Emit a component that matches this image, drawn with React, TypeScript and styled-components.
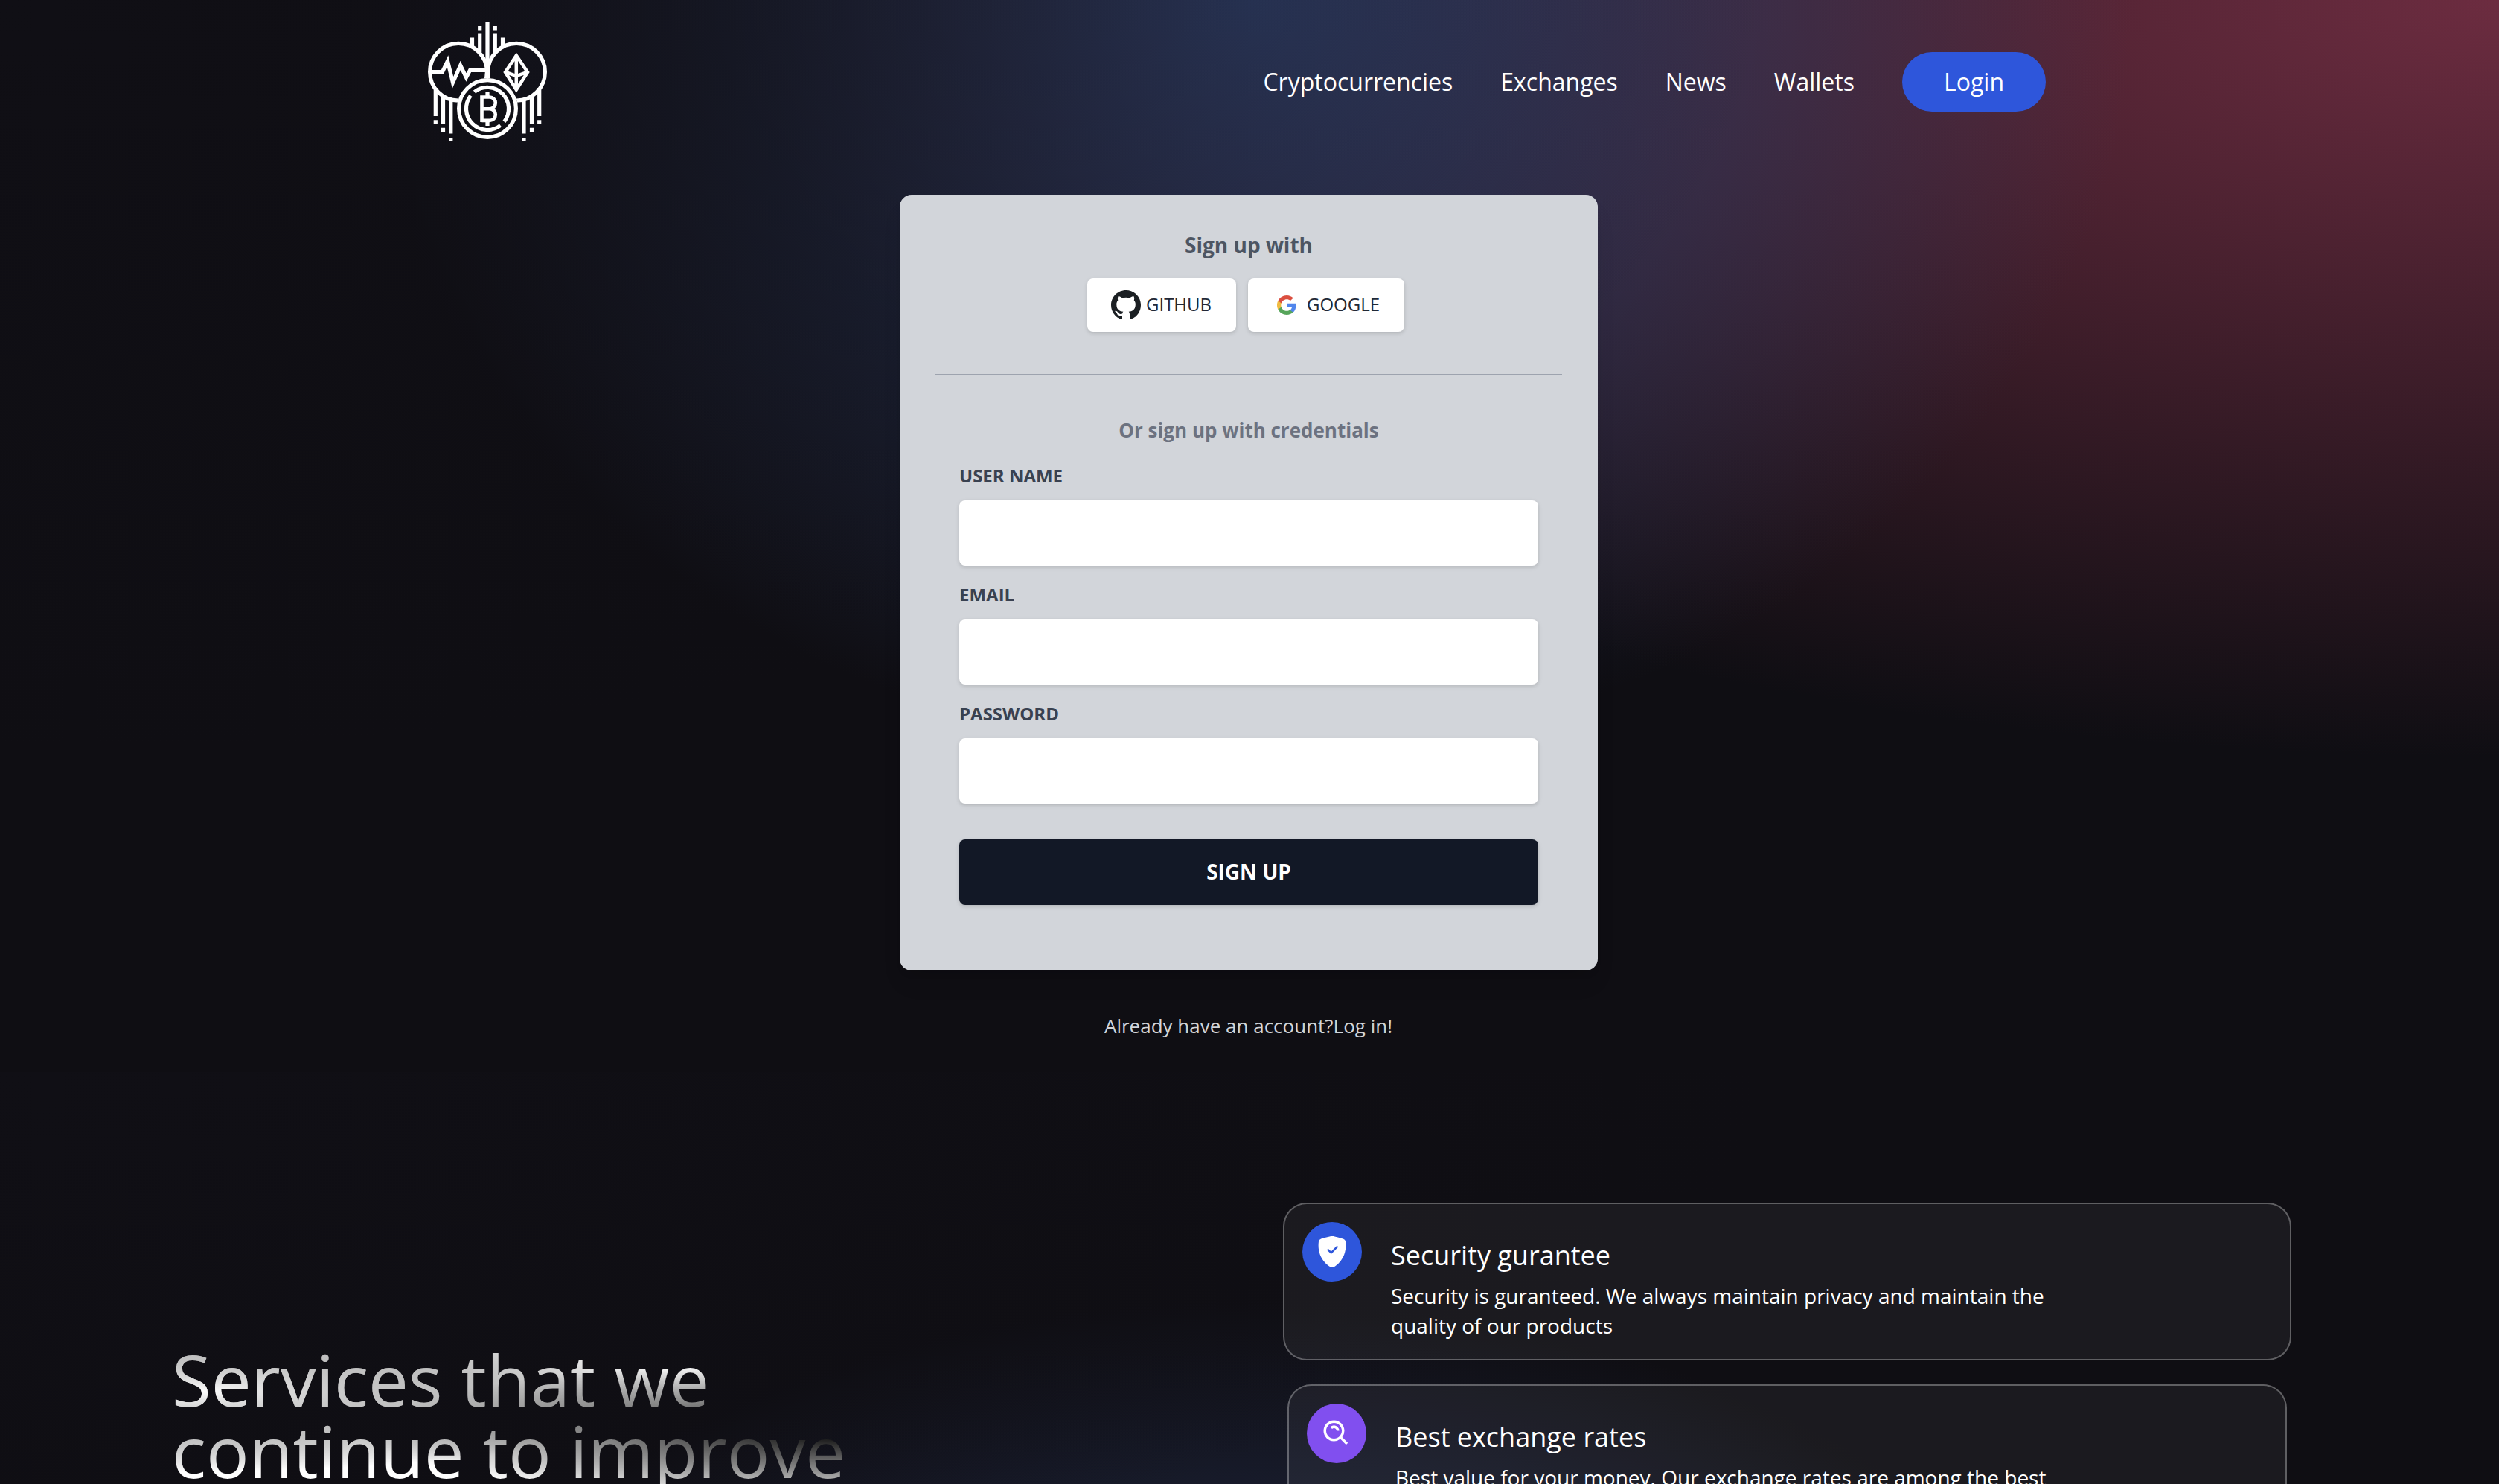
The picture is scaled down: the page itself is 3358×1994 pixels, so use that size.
import React from "react";
import styled, { createGlobalStyle } from "styled-components";
import { BsShieldFillCheck } from "react-icons/bs";
import { BiSearchAlt } from "react-icons/bi";

type RGB = [number, number, number];

/* Straight-alpha fade towards transparent black, expanded into stops. */
const fade = (at: string, [r, g, b]: RGB, end: number) => {
  const steps = 20;
  const stops = Array.from({ length: steps + 1 }, (_, i) => {
    const k = 1 - i / steps;
    const c = [r, g, b].map((v) => (v * k).toFixed(1)).join(",");
    return `rgba(${c},${k.toFixed(3)}) ${((end * i) / steps).toFixed(2)}%`;
  });
  return `radial-gradient(at ${at}, ${stops.join(",")})`;
};

const GlobalStyle = createGlobalStyle`
  *, *::before, *::after { box-sizing: border-box; }
  body {
    margin: 0;
    background: #0f0e13;
    font-family: "Open Sans", "Noto Sans", sans-serif;
    overflow: hidden;
  }
  h1, h3, h6, p { margin: 0; font-weight: 400; }
`;

const Page = styled.div`
  height: 1994px;
  overflow: hidden;
`;

const Welcome = styled.section`
  height: 1440px;
  background-color: #0f0e13;
  background-image: radial-gradient(at 0% 0%, #100f15 0, transparent 50%),
    radial-gradient(at 50% 0%, #2f3f69 0, transparent 50%),
    radial-gradient(at 100% 0%, #6c2c40 0, transparent 50%);
`;

const Navbar = styled.nav`
  display: flex;
  align-items: center;
  justify-content: space-between;
  height: 220px;
  padding: 0 609px 0 575px;
`;

const NavLinks = styled.ul`
  display: flex;
  align-items: center;
  gap: 64px;
  margin: 0;
  padding: 0;
  list-style: none;
  color: #fff;
  font-size: 32px;
  line-height: 48px;
`;

const LoginItem = styled.li`
  padding: 16px 56px;
  border-radius: 40px;
  background: #2e56db;
`;

const SignUp = styled.main`
  display: flex;
  flex-direction: column;
  align-items: center;
  padding-top: 42px;
`;

const Card = styled.div`
  width: 938px;
  height: 1042px;
  padding: 47px 48px 0;
  margin-right: 2px;
  border-radius: 16px;
  background: #d2d5da;
  box-shadow: 0 20px 30px -6px rgba(0, 0, 0, 0.1), 0 8px 12px -4px rgba(0, 0, 0, 0.05);
`;

const CardTitle = styled.h6`
  color: #4d5562;
  font-size: 28px;
  line-height: 40px;
  font-weight: 700;
  text-align: center;
`;

const Providers = styled.div`
  display: flex;
  justify-content: center;
  gap: 16px;
  margin: 25px 8px 0 0;
`;

const ProviderButton = styled.button<{ $width: number }>`
  display: flex;
  align-items: center;
  gap: 7px;
  width: ${(p) => p.$width}px;
  height: 72px;
  padding: 0 0 0 32px;
  border: 0;
  border-radius: 8px;
  background: #fff;
  color: #212836;
  font: 400 24px/32px "Open Sans", "Noto Sans", sans-serif;
  text-transform: uppercase;
  box-shadow: 0 2px 6px rgba(0, 0, 0, 0.1), 0 2px 4px rgba(0, 0, 0, 0.06);
`;

const ProviderName = styled.span`
  padding-bottom: 2px;
`;

const Divider = styled.hr`
  height: 2px;
  margin: 56px 0 0;
  border: 0;
  background: #9da3ae;
`;

const Form = styled.form`
  display: flex;
  flex-direction: column;
  padding: 56px 32px 0;
`;

const FormHint = styled.p`
  color: #6c7280;
  font-size: 26px;
  line-height: 36px;
  font-weight: 700;
  text-align: center;
  margin-bottom: 28px;
`;

const Label = styled.label`
  display: flex;
  flex-direction: column;
  gap: 18px;
  margin-bottom: 24px;
  color: #394150;
  font-size: 24px;
  line-height: 30px;
  font-weight: 700;
  text-transform: uppercase;
`;

const Input = styled.input`
  height: 88px;
  padding: 0 24px;
  border: 0;
  border-radius: 8px;
  background: #fff;
  box-shadow: 0 2px 6px rgba(0, 0, 0, 0.1), 0 2px 4px rgba(0, 0, 0, 0.06);
`;

const Submit = styled.button`
  height: 88px;
  margin-top: 24px;
  padding: 0 0 2px;
  border: 0;
  border-radius: 8px;
  background: #121826;
  color: #fff;
  font: 700 28px/40px "Open Sans", "Noto Sans", sans-serif;
  text-transform: uppercase;
  box-shadow: 0 2px 6px rgba(0, 0, 0, 0.1), 0 2px 4px rgba(0, 0, 0, 0.06);
`;

const LoginHint = styled.p`
  margin: 58px 3px 0 0;
  color: #d2d5da;
  font-size: 26px;
  line-height: 32px;
`;

const Services = styled.section`
  display: flex;
  height: 1052px;
  padding: 160px 231px;
  background-color: #0f0e13;
  background-image: radial-gradient(at 0% 0%, #100f15 0, transparent 50%),
    radial-gradient(at 50% 100%, #273458 0, transparent 50%);
`;

const Pitch = styled.div`
  display: flex;
  flex: 1;
  flex-direction: column;
  align-items: flex-start;
  padding-top: 189px;
`;

const Headline = styled.h1`
  padding: 16px 0;
  font-size: 96px;
  line-height: 96px;
  color: transparent;
  background-color: #fff;
  background-image: ${fade("4% 36%", [255, 255, 255], 53)},
    ${fade("100% 60%", [0, 0, 0], 50)};
  -webkit-background-clip: text;
  background-clip: text;
`;

const ServiceList = styled.div`
  display: flex;
  flex-direction: column;
  align-items: center;
  gap: 32px;
  width: 1355px;
  padding-top: 16px;
  margin-right: 48px;
`;

const ServiceCard = styled.article<{ $width: number }>`
  display: flex;
  align-items: flex-start;
  flex-shrink: 0;
  width: ${(p) => p.$width}px;
  height: 212px;
  padding: 24px;
  border: 2px solid rgba(255, 255, 255, 0.3);
  border-radius: 32px;
  background: rgba(255, 255, 255, 0.05);
`;

const Badge = styled.div<{ $color: string }>`
  display: flex;
  align-items: center;
  justify-content: center;
  flex-shrink: 0;
  width: 80px;
  height: 80px;
  border-radius: 50%;
  background: ${(p) => p.$color};
  color: #fff;
`;

const ServiceText = styled.div`
  padding: 17px 0 0 39px;
  color: #fff;
`;

const ServiceTitle = styled.h3`
  font-size: 36px;
  line-height: 56px;
`;

const ServiceCopy = styled.p`
  width: 900px;
  margin-top: 6px;
  font-size: 28px;
  line-height: 40px;
`;

const Logo = () => (
  <svg width="160" height="160" viewBox="575 30 160 160" fill="none" stroke="#fff" strokeWidth="5.2">
    <circle cx="616" cy="96.700" r="38.400" />
    <circle cx="694" cy="96.700" r="38.400" />
    <path d="M655 30V104M644.700 45.500V70M665.300 45.500V70M634.500 50.500V64M675.500 50.500V64M644.700 35V40.500M665.300 35V40.500" />
    <path d="M585.300 118V156M595.500 130V166.500M605.800 135V179.500M724.700 118V156M714.500 130V166.500M704 135V179.500" />
    <path d="M585.300 161.200V166.700M595.500 171.800V177.200M605.800 185V190M724.700 161.200V166.700M714.500 171.800V177.200M704 185V190" />
    <path d="M578 96.700H594.500L601.500 82L608.500 111L618.700 88L626.500 104L631.500 94.500H653" />
    <path d="M693.800 74.500L709 97L693.800 120.500L679 97ZM693.800 76V120M680 97L693.800 102L708 97" strokeWidth="4.500" />
    <circle cx="655" cy="146" r="41" fill="#101016" stroke="none" />
    <circle cx="655" cy="146" r="38.400" />
    <path d="M637.500 123.500A28.500 28.500 0 0 1 677.500 163.500M672.500 168.500A28.500 28.500 0 0 1 632.500 128.500" />
    <path d="M647.500 130.500H658A7.800 7.800 0 0 1 658 146.200H649M658 146.200A7.800 7.800 0 0 1 658 161.900H647.500M647.500 128.300V164.100" strokeWidth="4.600" />
    <path d="M655 123V131M655 162V169" />
  </svg>
);

const GithubMark = () => (
  <svg width="40" height="40" viewBox="0 0 16 16" fill="#1b1f23">
    <path d="M8 0C3.580 0 0 3.580 0 8c0 3.540 2.290 6.530 5.470 7.590.4.070.55-.17.55-.38 0-.19-.01-.82-.01-1.490-2.010.37-2.530-.49-2.690-.94-.09-.23-.48-.94-.82-1.130-.28-.15-.68-.52-.01-.53.63-.01 1.080.58 1.230.82.72 1.210 1.870.87 2.330.66.07-.52.28-.87.51-1.070-1.780-.2-3.640-.89-3.640-3.950 0-.87.31-1.590.82-2.150-.08-.2-.36-1.020.08-2.120 0 0 .67-.21 2.200.82.64-.18 1.320-.27 2-.27s1.360.09 2 .27c1.530-1.040 2.200-.82 2.200-.82.44 1.100.16 1.920.08 2.120.51.56.82 1.270.82 2.150 0 3.070-1.870 3.750-3.650 3.950.29.25.54.73.54 1.480 0 1.070-.01 1.930-.01 2.200 0 .21.15.46.55.38A8.010 8.010 0 0 0 16 8c0-4.420-3.580-8-8-8z" />
  </svg>
);

const GoogleMark = () => (
  <svg width="40" height="40" viewBox="-4.9 -4.9 33.8 33.8">
    <path fill="#5186ec" d="M22.560 12.250c0-.78-.07-1.530-.2-2.250H12v4.260h5.920c-.26 1.370-1.040 2.530-2.210 3.310v2.770h3.570c2.080-1.920 3.280-4.740 3.280-8.090z" />
    <path fill="#57a55b" d="M12 23c2.970 0 5.460-.98 7.280-2.660l-3.570-2.770c-.98.66-2.230 1.060-3.710 1.060-2.860 0-5.290-1.930-6.160-4.530H2.180v2.840C3.990 20.530 7.700 23 12 23z" />
    <path fill="#f0bb41" d="M5.840 14.090c-.22-.66-.35-1.360-.35-2.090s.13-1.430.35-2.090V7.070H2.180C1.430 8.550 1 10.220 1 12s.43 3.450 1.180 4.930l2.850-2.220.81-.62z" />
    <path fill="#db4f40" d="M12 5.380c1.620 0 3.060.56 4.210 1.640l3.150-3.150C17.450 2.090 14.970 1 12 1 7.700 1 3.990 3.470 2.180 7.070l3.660 2.840c.87-2.600 3.300-4.530 6.160-4.530z" />
  </svg>
);

const links = ["Cryptocurrencies", "Exchanges", "News", "Wallets"];
const fields = [
  { label: "User Name", type: "text" },
  { label: "Email", type: "email" },
  { label: "Password", type: "password" },
];

export default function App() {
  return (
    <Page>
      <GlobalStyle />
      <Welcome>
        <Navbar>
          <Logo />
          <NavLinks>
            {links.map((l) => (
              <li key={l}>{l}</li>
            ))}
            <LoginItem>Login</LoginItem>
          </NavLinks>
        </Navbar>
        <SignUp>
          <Card>
            <CardTitle>Sign up with</CardTitle>
            <Providers>
              <ProviderButton type="button" $width={200}>
                <GithubMark />
                <ProviderName>Github</ProviderName>
              </ProviderButton>
              <ProviderButton type="button" $width={210}>
                <GoogleMark />
                <ProviderName>Google</ProviderName>
              </ProviderButton>
            </Providers>
            <Divider />
            <Form>
              <FormHint>Or sign up with credentials</FormHint>
              {fields.map((f) => (
                <Label key={f.label}>
                  {f.label}
                  <Input type={f.type} />
                </Label>
              ))}
              <Submit type="button">Sign Up</Submit>
            </Form>
          </Card>
          <LoginHint>Already have an account?Log in!</LoginHint>
        </SignUp>
      </Welcome>
      <Services>
        <Pitch>
          <Headline>
            Services that we
            <br />
            continue to improve
          </Headline>
        </Pitch>
        <ServiceList>
          <ServiceCard $width={1355}>
            <Badge $color="#2e56db">
              <BsShieldFillCheck size={42} />
            </Badge>
            <ServiceText>
              <ServiceTitle>Security gurantee</ServiceTitle>
              <ServiceCopy>
                Security is guranteed. We always maintain privacy and maintain the quality of our products
              </ServiceCopy>
            </ServiceText>
          </ServiceCard>
          <ServiceCard $width={1343}>
            <Badge $color="#814fef">
              <BiSearchAlt size={42} />
            </Badge>
            <ServiceText>
              <ServiceTitle>Best exchange rates</ServiceTitle>
              <ServiceCopy>Best value for your money. Our exchange rates are among the best</ServiceCopy>
            </ServiceText>
          </ServiceCard>
        </ServiceList>
      </Services>
    </Page>
  );
}
